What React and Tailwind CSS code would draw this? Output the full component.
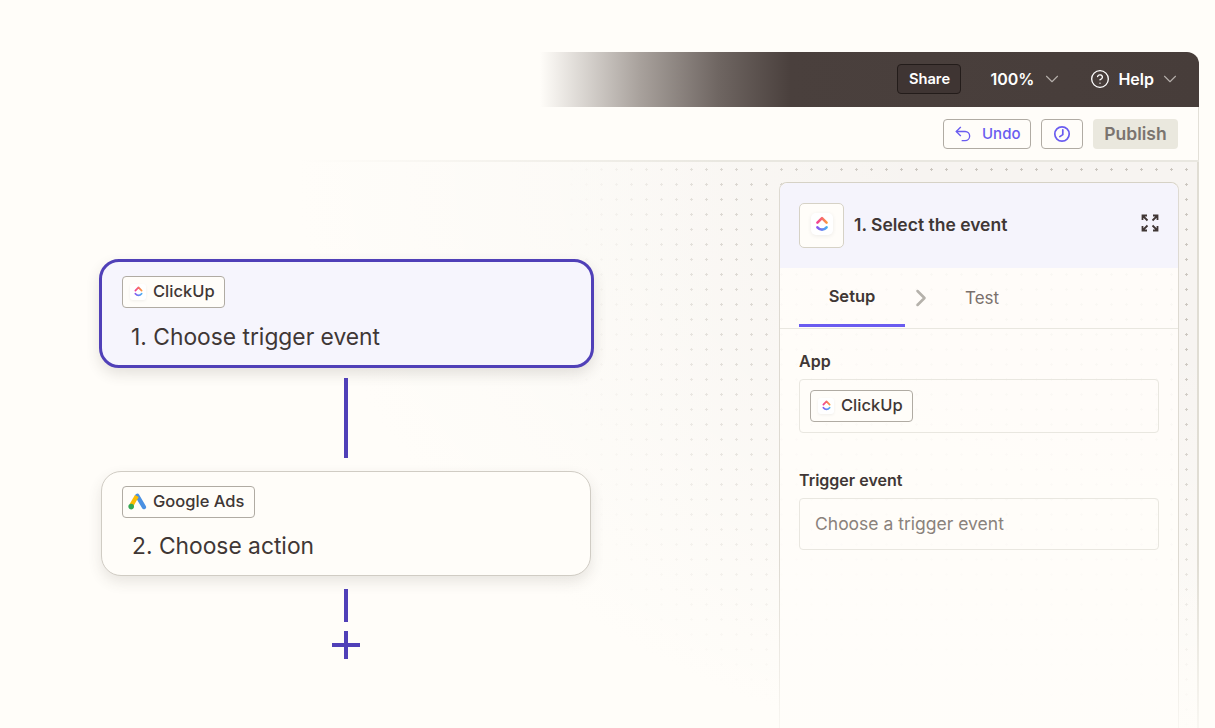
import React from "react";
import { ChevronDown, ChevronRight, CircleHelp, Undo2 } from "lucide-react";

const ClickUpLogo = ({ size = 16, id = "a" }) => (
  <svg width={size} height={size} viewBox="0 0 24 24" fill="none">
    <defs>
      <linearGradient id={`top-${id}`} x1="6" y1="10" x2="18" y2="10" gradientUnits="userSpaceOnUse">
        <stop stopColor="#f0389b" />
        <stop offset="1" stopColor="#fc9f3a" />
      </linearGradient>
      <linearGradient id={`bottom-${id}`} x1="6" y1="16" x2="18" y2="16" gradientUnits="userSpaceOnUse">
        <stop stopColor="#8b4ff0" />
        <stop offset="1" stopColor="#43b4f0" />
      </linearGradient>
    </defs>
    <path d="M7 10.5 12 5.5l5 5" stroke={`url(#top-${id})`} strokeWidth="2.8" strokeLinecap="round" strokeLinejoin="round" />
    <path d="M7 15.6c3 3.4 7 3.4 10 0" stroke={`url(#bottom-${id})`} strokeWidth="2.8" strokeLinecap="round" />
  </svg>
);

const GoogleAdsLogo = () => (
  <svg width="19" height="17" viewBox="0 0 19 17" fill="none">
    <path d="M9.3 2.8 15.9 14" stroke="#4a90e2" strokeWidth="4.4" strokeLinecap="round" />
    <path d="M8.8 3 3.6 12" stroke="#fbbc04" strokeWidth="4.4" />
    <circle cx="3.2" cy="13.6" r="2.8" fill="#34a853" />
  </svg>
);

const ExpandIcon = () => (
  <svg width="18" height="18" viewBox="0 0 18 18" fill="none" stroke="#403735" strokeWidth="1.8">
    <path d="M1.5 6V1.5H6M1.5 1.5 6.5 6.5" />
    <path d="M16.5 6V1.5H12M16.5 1.5l-5 5" />
    <path d="M1.5 12v4.5H6M1.5 16.5l5-5" />
    <path d="M16.5 12v4.5H12M16.5 16.5l-5-5" />
  </svg>
);

const ClockIcon = () => (
  <svg width="18" height="18" viewBox="0 0 18 18" fill="none" stroke="#6a5cf0" strokeWidth="1.7">
    <circle cx="9" cy="9" r="7.2" />
    <path d="M9.8 4.8V9.6L6.8 11.6" strokeLinecap="round" />
  </svg>
);

const AppPill = ({ logo, label, className }) => (
  <div className={`flex h-8 items-center rounded border border-[#b0aba3] bg-[#fffdf9] pb-[1px] text-[16.5px] font-medium text-[#403735] ${className}`}>
    {logo}
    <span>{label}</span>
  </div>
);

const ClickUpChip = ({ id }) => (
  <span className="flex h-[16px] w-[16px] items-center justify-center rounded-[3px] bg-white shadow-[0_1px_3px_rgba(0,0,0,0.06)]">
    <ClickUpLogo size={15} id={id} />
  </span>
);

const App = () => {
  return (
    <div className="flex h-[728px] w-[1215px] flex-col overflow-hidden bg-[#fffdf9] pt-[52px] pr-[16px] font-['Inter',sans-serif] text-[#403735]">
      {/* Top bar */}
      <div className="ml-[540px] flex h-[55px] shrink-0 items-center rounded-tr-xl bg-[linear-gradient(to_right,#fffdf9_0%,#a9a29d_15%,#6f6662_27%,#4a403d_38%,#473d3a_100%)] pr-[18px] pb-[2px] text-white">
        <div className="ml-auto flex h-[30px] w-[64px] items-center justify-center rounded border border-[#231c1a] bg-[#3f3533] pt-[2px] text-[14.7px] font-semibold">
          Share
        </div>
        <span className="ml-[29px] text-base font-semibold">100%</span>
        <ChevronDown className="ml-[7px] text-[#b4aeaa]" size={22} strokeWidth={1.2} />
        <CircleHelp className="ml-[27px]" size={20} strokeWidth={1.6} />
        <span className="ml-[8px] text-base font-semibold">Help</span>
        <ChevronDown className="ml-[5px] text-[#b4aeaa]" size={22} strokeWidth={1.2} />
      </div>

      {/* Toolbar */}
      <div className="flex h-[53px] shrink-0 items-center justify-end gap-[10px] border-r border-r-[#e3e0d8] pr-5">
        <div className="flex h-[30px] w-[88px] items-center rounded border border-[#b0aba3] pl-[9px] text-[15px] font-medium text-[#6a5cf0]">
          <Undo2 size={20} strokeWidth={1.6} />
          <span className="ml-[9px] pt-[2px]">Undo</span>
        </div>
        <div className="flex h-[30px] w-[42px] items-center justify-center rounded border border-[#b0aba3]">
          <ClockIcon />
        </div>
        <div className="flex h-[30px] w-[85px] items-center justify-center rounded bg-[#eae8de] pt-[1px] text-[17.5px] font-semibold text-[#7b746f]">
          Publish
        </div>
      </div>
      <div className="h-[2px] shrink-0 bg-[linear-gradient(to_right,#fffdf9_25%,#e9e7e0_60%)]" />

      {/* Canvas */}
      <div className="relative flex min-h-0 flex-1 border-r-2 border-r-[#e0ddd4] bg-[#f7f4f1] bg-[image:radial-gradient(ellipse_900px_620px_at_100%_0,#fffdf900_30%,#fffdf9_100%),linear-gradient(to_right,#f9f7f4_556px,#f9f7f400_720px),radial-gradient(ellipse_2px_0.6px_at_center,#cbc6bf_60%,transparent_100%),radial-gradient(ellipse_0.6px_2px_at_center,#cbc6bf_60%,transparent_100%)] bg-[size:100%_100%,100%_100%,15px_15px,15px_15px] bg-[position:0_0,0_0,9px_0,9px_0]">
        {/* Flow */}
        <div className="flex w-[779px] shrink-0 flex-col items-start pt-[97px] pl-[99px]">
          <div className="h-[109px] w-[495px] shrink-0 rounded-[20px] border-[3px] border-[#5040b8] bg-[#f6f5fd] pt-[14px] pl-[20px] shadow-[0_6px_14px_rgba(64,55,53,0.14)]">
            <AppPill
              className="w-[103px] gap-[7px] pl-[7px]"
              logo={<ClickUpChip id="card" />}
              label="ClickUp"
            />
            <div className="mt-[13px] ml-[9px] text-[22.8px] leading-[32px]">
              1. Choose trigger event
            </div>
          </div>
          <div className="mt-[10px] mb-[13px] ml-[245px] h-[80px] w-1 shrink-0 bg-[#5040b8]" />
          <div className="ml-[2px] h-[105px] w-[490px] shrink-0 rounded-[20px] border border-[#d0ccc4] bg-[#fffdf9] pt-[14px] pl-[20px] shadow-[0_6px_14px_rgba(64,55,53,0.12)]">
            <AppPill
              className="w-[133px] gap-[6px] pl-[5px]"
              logo={<GoogleAdsLogo />}
              label="Google Ads"
            />
            <div className="mt-[12px] ml-[10px] text-[22.8px] leading-[32px]">
              2. Choose action
            </div>
          </div>
          <div className="mt-[13px] ml-[245px] h-[33px] w-1 shrink-0 bg-[#5040b8]" />
          <svg className="mt-[9px] ml-[233px] shrink-0" width="28" height="28" viewBox="0 0 28 28" fill="#5040b8">
            <rect x="12" width="4" height="28" />
            <rect y="12" width="28" height="4" />
          </svg>
        </div>

        {/* Side panel */}
        <div className="mt-[20px] flex h-[600px] w-[400px] shrink-0 flex-col rounded-t-lg border border-[#dedad2] border-t-[#d6d2c6] bg-[#fffdf9e6]">
          <div className="flex h-[85px] shrink-0 items-center rounded-t-lg bg-[#f5f4fc] pr-[19px] pl-[19px]">
            <div className="flex h-[45px] w-[45px] items-center justify-center rounded-[5px] border border-[#d6d2c6] bg-[#fffdf9]">
              <span className="mb-[3px] flex h-[22px] w-[22px] items-center justify-center rounded-[5px] bg-white shadow-[0_1px_4px_rgba(0,0,0,0.07)]">
                <ClickUpLogo size={22} id="panel" />
              </span>
            </div>
            <span className="ml-[10px] pb-[1px] text-[17.5px] font-semibold">1. Select the event</span>
            <span className="mb-[6px] ml-auto">
              <ExpandIcon />
            </span>
          </div>

          <div className="flex h-[61px] shrink-0 border-b border-[#e9e7e0] pl-[19px]">
            <div className="flex h-[59px] w-[106px] items-center justify-center border-b-[3px] border-[#6a5cf0] text-[16.5px] font-semibold">
              Setup
            </div>
            <div className="ml-[2px] flex items-center">
              <ChevronRight className="text-[#b5b1ab]" size={28} strokeWidth={2.2} />
            </div>
            <div className="ml-[30px] flex items-center pt-[2px] text-[17px] text-[#7a706c]">Test</div>
          </div>

          <div className="px-[19px] pt-[22px]">
            <div className="text-base leading-5 font-semibold">App</div>
            <div className="mt-[8px] flex h-[54px] items-center rounded border border-[#e9e7e0] pl-[10px]">
              <AppPill
                className="w-[103px] gap-[7px] pl-[7px]"
                logo={<ClickUpChip id="field" />}
                label="ClickUp"
              />
            </div>
            <div className="mt-[37px] text-base leading-5 font-semibold">Trigger event</div>
            <div className="mt-[8px] flex h-[52px] items-center rounded border border-[#e9e7e0] pl-[15px] text-[17.5px] text-[#8a827c]">
              Choose a trigger event
            </div>
          </div>
        </div>

        {/* Bottom fade over the panel edges */}
        <div className="pointer-events-none absolute top-[400px] right-[-2px] bottom-0 left-[779px] bg-[linear-gradient(to_bottom,#fffdf900,#fffdf9cc)]" />
      </div>
    </div>
  );
};

export default App;
